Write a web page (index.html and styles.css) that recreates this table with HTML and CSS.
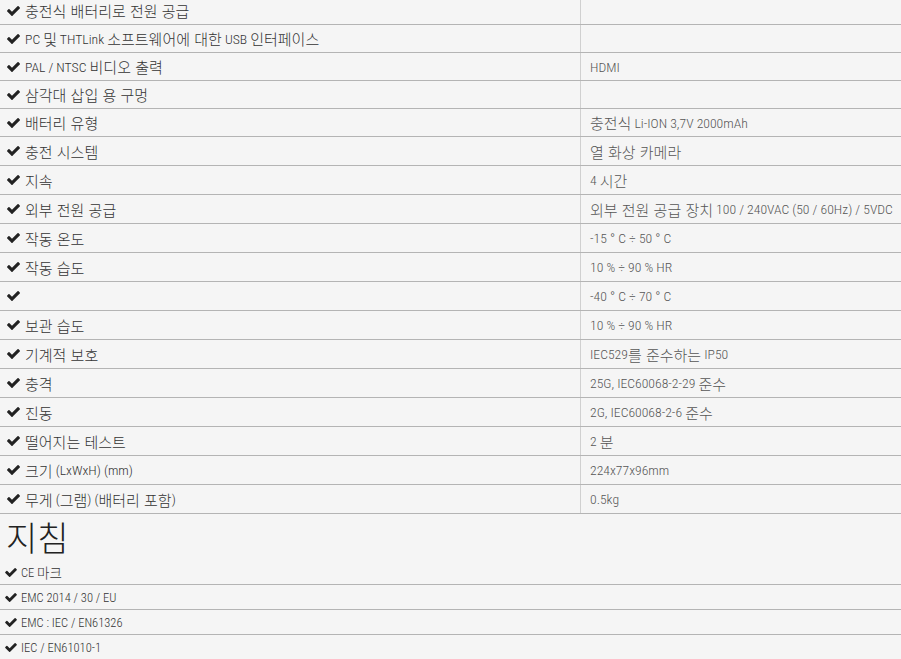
FILE: index.html
```html
<!DOCTYPE html>
<html lang="ko">
<head>
<meta charset="utf-8">
<title>사양</title>
<link rel="stylesheet" href="styles.css">
</head>
<body>
<svg class="defs" width="0" height="0" aria-hidden="true">
  <symbol id="chk" viewBox="121 334 1550 1188">
    <path d="M1671 566q0 40-28 68l-724 724-136 136q-28 28-68 28t-68-28l-136-136-362-362q-28-28-28-68t28-68l136-136q28-28 68-28t68 28l294 295 656-657q28-28 68-28t68 28l136 136q28 28 28 68z"/>
  </symbol>
</svg>
<div class="page">
  <div class="spec">
    <div class="row short"><div class="name"><svg class="ic"><use href="#chk"/></svg><span class="ko">충전식 배터리로 전원 공급</span></div><div class="value"></div></div>
    <div class="row short"><div class="name"><svg class="ic"><use href="#chk"/></svg>PC <span class="ko">및</span> THTLink <span class="ko">소프트웨어에 대한</span> USB <span class="ko">인터페이스</span></div><div class="value"></div></div>
    <div class="row short"><div class="name"><svg class="ic"><use href="#chk"/></svg>PAL / NTSC <span class="ko">비디오 출력</span></div><div class="value">HDMI</div></div>
    <div class="row short"><div class="name"><svg class="ic"><use href="#chk"/></svg><span class="ko">삼각대 삽입 용 구멍</span></div><div class="value"></div></div>
    <div class="row short"><div class="name"><svg class="ic"><use href="#chk"/></svg><span class="ko">배터리 유형</span></div><div class="value"><span class="ko">충전식</span>&nbsp;Li-ION 3,7V 2000mAh</div></div>
    <div class="row"><div class="name"><svg class="ic"><use href="#chk"/></svg><span class="ko">충전 시스템</span></div><div class="value"><span class="ko">열 화상 카메라</span></div></div>
    <div class="row"><div class="name"><svg class="ic"><use href="#chk"/></svg><span class="ko">지속</span></div><div class="value">4&nbsp;<span class="ko">시간</span></div></div>
    <div class="row"><div class="name"><svg class="ic"><use href="#chk"/></svg><span class="ko">외부 전원 공급</span></div><div class="value"><span class="ko">외부 전원 공급 장치</span>&nbsp;100 / 240VAC (50 / 60Hz) / 5VDC</div></div>
    <div class="row"><div class="name"><svg class="ic"><use href="#chk"/></svg><span class="ko">작동 온도</span></div><div class="value">-15 ° C ÷ 50 ° C</div></div>
    <div class="row"><div class="name"><svg class="ic"><use href="#chk"/></svg><span class="ko">작동 습도</span></div><div class="value">10 % ÷ 90 % HR</div></div>
    <div class="row"><div class="name"><svg class="ic"><use href="#chk"/></svg></div><div class="value">-40 ° C ÷ 70 ° C</div></div>
    <div class="row"><div class="name"><svg class="ic"><use href="#chk"/></svg><span class="ko">보관 습도</span></div><div class="value">10 % ÷ 90 % HR</div></div>
    <div class="row"><div class="name"><svg class="ic"><use href="#chk"/></svg><span class="ko">기계적 보호</span></div><div class="value">IEC529<span class="ko">를 준수하는</span>&nbsp;IP50</div></div>
    <div class="row"><div class="name"><svg class="ic"><use href="#chk"/></svg><span class="ko">충격</span></div><div class="value">25G, IEC60068-2-29&nbsp;<span class="ko">준수</span></div></div>
    <div class="row"><div class="name"><svg class="ic"><use href="#chk"/></svg><span class="ko">진동</span></div><div class="value">2G, IEC60068-2-6&nbsp;<span class="ko">준수</span></div></div>
    <div class="row"><div class="name"><svg class="ic"><use href="#chk"/></svg><span class="ko">떨어지는 테스트</span></div><div class="value">2&nbsp;<span class="ko">분</span></div></div>
    <div class="row"><div class="name"><svg class="ic"><use href="#chk"/></svg><span class="ko">크기</span>&nbsp;(LxWxH) (mm)</div><div class="value">224x77x96mm</div></div>
    <div class="row"><div class="name"><svg class="ic"><use href="#chk"/></svg><span class="ko">무게</span>&nbsp;(<span class="ko">그램</span>) (<span class="ko">배터리 포함</span>)</div><div class="value">0.5kg</div></div>
  </div>
  <h2 class="title">지침</h2>
  <ul class="dir">
    <li><svg class="ic sm"><use href="#chk"/></svg>CE&nbsp;<span class="ko">마크</span></li>
    <li><svg class="ic sm"><use href="#chk"/></svg>EMC 2014 / 30 / EU</li>
    <li><svg class="ic sm"><use href="#chk"/></svg>EMC : IEC / EN61326</li>
    <li><svg class="ic sm"><use href="#chk"/></svg>IEC / EN61010-1</li>
  </ul>
</div>
</body>
</html>
```
FILE: styles.css
```css
html, body {
  margin: 0;
  padding: 0;
  background: #f5f5f5;
}
body {
  font-family: "Liberation Sans Narrow", "Roboto Condensed", "Noto Sans CJK KR", sans-serif;
  font-size: 13.7px;
  font-weight: 300;
  color: #333;
  overflow: hidden;
}
.defs {
  position: absolute;
}
.page {
  margin-top: -3px;
}
.ko {
  font-family: "Noto Sans CJK KR", sans-serif;
  font-size: 15px;
  font-weight: 300;
}
.spec {
  display: flex;
  flex-direction: column;
}
.row {
  display: grid;
  grid-template-columns: 580px 1fr;
  height: 29px;
  box-sizing: border-box;
  border-bottom: 1px solid #b4b4b4;
}
.row.short {
  height: 28px;
}
.name {
  display: flex;
  align-items: center;
  padding-left: 7px;
  white-space: pre;
  color: #333;
}
.value {
  display: flex;
  align-items: center;
  padding-left: 9px;
  border-left: 1px solid #d0d0d0;
  color: #555;
  white-space: pre;
}
.ic {
  width: 13px;
  height: 10px;
  fill: #222;
  margin-right: 5px;
  flex: none;
}
.ic.sm {
  width: 12px;
  height: 9px;
  margin-right: 4px;
}
.title {
  margin: 0;
  height: 46px;
  line-height: 46px;
  padding-left: 6px;
  font-family: "Noto Sans CJK KR", sans-serif;
  font-weight: 300;
  font-size: 34px;
  color: #222;
}
.dir {
  list-style: none;
  margin: 0;
  padding: 0;
}
.dir li {
  display: flex;
  align-items: center;
  height: 25px;
  box-sizing: border-box;
  padding-left: 5px;
  border-bottom: 1px solid #b4b4b4;
  font-size: 12.5px;
  white-space: pre;
}
.dir li .ko {
  font-size: 13.5px;
}
```
